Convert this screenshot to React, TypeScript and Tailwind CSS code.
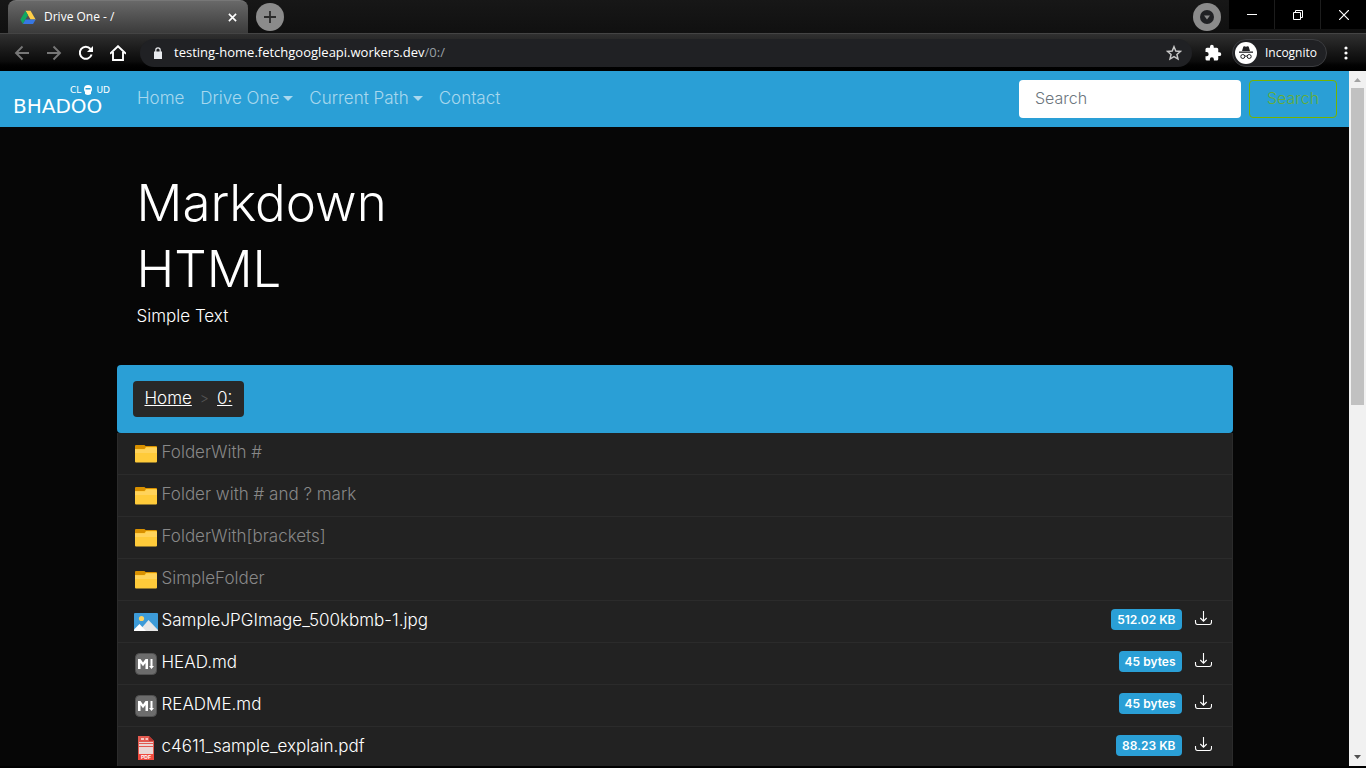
import type { ReactNode } from 'react';

function DriveLogo() {
  return (
    <svg viewBox="0 0 24 22" className="h-[14px] w-4 shrink-0" aria-hidden="true">
      <path d="M8 1h8l8 14h-8z" fill="#ffcf48" />
      <path d="M8 1l4 7L4 22l-4-7z" fill="#11a861" />
      <path d="M8 15h16l-4 7H4z" fill="#3777e3" />
    </svg>
  );
}

function PuzzleIcon() {
  return (
    <svg viewBox="0 0 24 24" className="size-[18px]" fill="#fff" aria-hidden="true">
      <path d="M20.500 11H19V7a2 2 0 0 0-2-2h-4V3.500a2.500 2.500 0 0 0-5 0V5H4a2 2 0 0 0-2 2v3.800h1.500a2.700 2.700 0 0 1 0 5.400H2V20a2 2 0 0 0 2 2h3.800v-1.500a2.700 2.700 0 0 1 5.400 0V22H17a2 2 0 0 0 2-2v-4h1.500a2.500 2.500 0 0 0 0-5z" />
    </svg>
  );
}

function IncognitoIcon() {
  return (
    <svg viewBox="0 0 22 22" className="size-[22px] shrink-0" aria-hidden="true">
      <circle cx="11" cy="11" r="11" fill="#fff" />
      <path d="M7 9l1.300-4.300q.3-.7 1-.5l1.700.5 1.700-.5q.7-.2 1 .5L15 9z" fill="#202124" />
      <path d="M4 9.500h14v1.300H4z" fill="#202124" />
      <g fill="none" stroke="#202124" strokeWidth="1">
        <circle cx="7.800" cy="14.500" r="2" />
        <circle cx="14.200" cy="14.500" r="2" />
        <path d="M9.800 14.300q1.200-.7 2.400 0" />
      </g>
    </svg>
  );
}

function TabStrip() {
  return (
    <div className="flex h-[33px] shrink-0 justify-between bg-linear-to-b from-[#171717] to-[#101010]">
      <div className="flex">
        <div className="ml-2 flex h-[33px] w-60 items-center rounded-t-lg border-t border-[#777] bg-linear-to-b from-[#696969] to-[#3b3b3b] pr-2 pl-3 text-white">
          <DriveLogo />
          <span className="ml-2 flex-1 text-xs">Drive One - /</span>
          <button aria-label="Close tab" className="grid size-4 place-items-center">
            <svg viewBox="0 0 10 10" className="size-[9px]" stroke="#fff" strokeWidth="1.800" aria-hidden="true">
              <path d="M1 1l8 8M9 1L1 9" />
            </svg>
          </button>
        </div>
        <button aria-label="New tab" className="mt-[3px] ml-2 grid size-7 place-items-center rounded-full bg-[#8b8b8b]">
          <svg viewBox="0 0 12 12" className="size-3" stroke="#2b2b2b" strokeWidth="1.800" aria-hidden="true">
            <path d="M6 0v12M0 6h12" />
          </svg>
        </button>
      </div>
      <div className="flex">
        <button aria-label="Search tabs" className="mt-[3px] mr-2 grid size-7 place-items-center rounded-full bg-[#8b8b8b]">
          <svg viewBox="0 0 14 14" className="size-[14px]" aria-hidden="true">
            <circle cx="7" cy="7" r="7" fill="#202124" />
            <path d="M4 5.500h6L7 9.500z" fill="#8b8b8b" />
          </svg>
        </button>
        <div className="flex h-[29px] gap-px bg-[#1c1c1c]">
          <button aria-label="Minimize" className="grid w-[45px] place-items-center bg-black">
            <svg viewBox="0 0 10 10" className="size-[10px]" stroke="#fff" aria-hidden="true">
              <path d="M0 4.500h10" />
            </svg>
          </button>
          <button aria-label="Restore" className="grid w-[45px] place-items-center bg-black">
            <svg viewBox="0 0 10 10" className="size-[10px]" stroke="#fff" fill="none" aria-hidden="true">
              <path d="M.5 2.500h7v7h-7zM2.500 2.500v-2h7v7h-2" />
            </svg>
          </button>
          <button aria-label="Close" className="grid w-[45px] place-items-center bg-black">
            <svg viewBox="0 0 10 10" className="size-[10px]" stroke="#fff" strokeWidth="1.200" aria-hidden="true">
              <path d="M0 0l10 10M10 0L0 10" />
            </svg>
          </button>
        </div>
      </div>
    </div>
  );
}

function Toolbar() {
  return (
    <div className="flex h-[38px] shrink-0 items-center border-t border-[#444] bg-linear-to-b from-[#303030] via-[#0b0b0b] via-75% to-black pr-[17px] pl-[14px] text-white">
      <div className="flex gap-4">
        <button aria-label="Back">
          <svg viewBox="0 0 16 16" className="size-4" fill="none" stroke="#777" strokeWidth="1.900" aria-hidden="true">
            <path d="M15 8H2M8.500 1.500L2 8l6.500 6.500" />
          </svg>
        </button>
        <button aria-label="Forward">
          <svg viewBox="0 0 16 16" className="size-4" fill="none" stroke="#777" strokeWidth="1.900" aria-hidden="true">
            <path d="M1 8h13M7.500 1.500L14 8l-6.500 6.500" />
          </svg>
        </button>
        <button aria-label="Reload">
          <svg viewBox="0 0 16 16" className="size-4" fill="none" stroke="#fff" strokeWidth="2" aria-hidden="true">
            <path d="M13.600 9.500A6 6 0 1 1 12.500 4" />
            <path d="M15 1v6H9z" fill="#fff" stroke="none" />
          </svg>
        </button>
        <button aria-label="Home page">
          <svg viewBox="0 0 16 16" className="size-4" fill="none" stroke="#fff" strokeWidth="1.900" aria-hidden="true">
            <path d="M0 8.700L8 1.200l8 7.500M3 7v8h10V7" />
          </svg>
        </button>
      </div>
      <div className="ml-[14px] flex h-7 flex-1 items-center rounded-full bg-[#202124] pr-[10px] pl-[14px]">
        <svg viewBox="0 0 8 12" className="h-3 w-2" aria-hidden="true">
          <path d="M0 4.500h8V12H0z" fill="#e8eaed" />
          <path d="M1.800 5V3a2.200 2.200 0 0 1 4.400 0v2" fill="none" stroke="#e8eaed" strokeWidth="1.200" />
        </svg>
        <span className="ml-3 flex-1 text-[13px]">
          testing-home.fetchgoogleapi.workers.dev<span className="text-[#9aa0a6]">/0:/</span>
        </span>
        <button aria-label="Bookmark this page">
          <svg viewBox="0 0 24 24" className="size-4" fill="none" stroke="#c8c8c8" strokeWidth="2.200" aria-hidden="true">
            <path d="M12 2.500l2.700 6.500 7 .6-5.300 4.600 1.600 6.900-6-3.700-6 3.700 1.600-6.900L2.300 9.600l7-.6z" />
          </svg>
        </button>
      </div>
      <button aria-label="Extensions" className="ml-3">
        <PuzzleIcon />
      </button>
      <div className="ml-[10px] flex h-7 items-center gap-2 rounded-full border border-[#3c3d40] bg-[#202124] pr-[9px] pl-[2px] text-xs">
        <IncognitoIcon />
        Incognito
      </div>
      <button aria-label="Menu" className="ml-4 px-px">
        <svg viewBox="0 0 4 14" className="h-[14px] w-1" fill="#fff" aria-hidden="true">
          <circle cx="2" cy="2" r="1.600" />
          <circle cx="2" cy="7" r="1.600" />
          <circle cx="2" cy="12" r="1.600" />
        </svg>
      </button>
    </div>
  );
}

function BrandLogo() {
  return (
    <a href="#" aria-label="Bhadoo Cloud" className="flex w-[98px] flex-col text-white">
      <svg viewBox="0 0 98 38" className="h-[38px] w-[98px]" fill="#fff" fontFamily="DejaVu Sans" fontWeight="400">
        <text x="57" y="13" fontSize="9">CL</text>
        <path d="M71 9q0-4 4-4t4 4q0 2-1 3v2q-3 2-6 0v-2q-1-1-1-3z" />
        <path d="M72.500 8h5v1.500h-5z" fill="#2a9fd6" />
        <text x="97" y="13" fontSize="9" textAnchor="end">UD</text>
        <text x="0" y="33" fontSize="20">BHADOO</text>
      </svg>
    </a>
  );
}

function Caret() {
  return (
    <svg viewBox="0 0 10 5" className="ml-1 h-[5px] w-[10px]" fill="currentColor" aria-hidden="true">
      <path d="M0 0h10L5 5z" />
    </svg>
  );
}

function NavItem({ children, menu }: { children: ReactNode; menu?: boolean }) {
  return (
    <a href="#" className="flex items-center px-2">
      {children}
      {menu && <Caret />}
    </a>
  );
}

function Navbar() {
  return (
    <nav className="flex h-14 shrink-0 items-center bg-[#2a9fd6] pr-3 pl-[13px]">
      <BrandLogo />
      <div className="ml-[18px] flex pb-[2px] text-white/60">
        <NavItem>Home</NavItem>
        <NavItem menu>Drive One</NavItem>
        <NavItem menu>Current Path</NavItem>
        <NavItem>Contact</NavItem>
      </div>
      <form className="ml-auto flex gap-2">
        <input
          type="search"
          aria-label="Search"
          placeholder="Search"
          className="h-[38px] w-[222px] rounded bg-white px-4 pb-[2px] text-base text-[#222] placeholder:text-[#6c757d]"
        />
        <button type="button" className="h-[38px] w-[88px] rounded border border-[#77b300] pb-[2px] text-base text-[#77b300]/75">
          Search
        </button>
      </form>
    </nav>
  );
}

function FolderIcon() {
  return (
    <svg viewBox="0 0 24 24" className="mt-1 size-6" aria-hidden="true">
      <path d="M1 4q0-1 1-1h8q1 0 1.500 1H22q1 0 1 1v6H1z" fill="#d89000" />
      <path d="M1 7h9.500L12 5h10q1 0 1 1v13.500q0 1-1 1H2q-1 0-1-1z" fill="#ffcb3a" />
      <path d="M1 7.500h10l1.300-1.700H23V11H1z" fill="#ffd35b" />
    </svg>
  );
}

function ImageIcon() {
  return (
    <svg viewBox="0 0 24 24" className="mt-1 size-6" aria-hidden="true">
      <path d="M1 3h22q1 0 1 1v17H0V4q0-1 1-1z" fill="#3d9bd8" />
      <circle cx="7.500" cy="8.500" r="2.600" fill="#ffd25e" />
      <path d="M5 21l9.500-11L24 20v1z" fill="#e6e6e6" />
      <path d="M0 21v-1.500L5.500 14l6.500 7z" fill="#fff" />
    </svg>
  );
}

function MarkdownIcon() {
  return (
    <svg viewBox="0 0 24 24" className="mt-1 size-6" aria-hidden="true">
      <rect x="1.500" y="1.500" width="21" height="21" rx="4" fill="#6c6c6c" stroke="#515151" />
      <path d="M4 17V7h2.500L9 10.500 11.500 7H14v10h-2.500v-6L9 14.300 6.500 11v6z" fill="#fff" />
      <path d="M16.500 7h2v7H20l-2.500 3L15 14h1.500z" fill="#fff" />
    </svg>
  );
}

function PdfIcon() {
  return (
    <svg viewBox="0 0 24 24" className="mt-1 size-6" aria-hidden="true">
      <path d="M4 0h11l5 5v18q0 1-1 1H5q-1 0-1-1z" fill="#e25a50" />
      <path d="M15 0l5 5h-5z" fill="#b93630" />
      <path d="M5 6h14v12H5z" fill="#e9d7d5" />
      <path d="M7 2h3v2H7zM11.500 2H14v2h-2.500z" fill="#f5c7c3" />
      <path d="M5 7.500h14M5 10.500h14" stroke="#e25a50" strokeWidth="1" />
      <path d="M4 18h16v6H4z" fill="#f04a3e" />
      <text x="12" y="23" fontSize="5" fontWeight="700" textAnchor="middle" fill="#fff" fontFamily="Liberation Sans">PDF</text>
    </svg>
  );
}

function DownloadIcon() {
  return (
    <svg viewBox="0 0 18 16" className="h-4 w-[18px]" fill="none" stroke="#fff" strokeWidth="1.100" aria-hidden="true">
      <path d="M9.500 1v10M6.300 8l3.200 3.200L12.700 8" />
      <path d="M1.500 10v2q0 2.500 2 2.500h12q2 0 2-2.500v-2" />
    </svg>
  );
}

const folders = ['FolderWith #', 'Folder with # and ? mark', 'FolderWith[brackets]', 'SimpleFolder'];

const files = [
  { name: 'SampleJPGImage_500kbmb-1.jpg', size: '512.02 KB', icon: <ImageIcon /> },
  { name: 'HEAD.md', size: '45 bytes', icon: <MarkdownIcon /> },
  { name: 'README.md', size: '45 bytes', icon: <MarkdownIcon /> },
  { name: 'c4611_sample_explain.pdf', size: '88.23 KB', icon: <PdfIcon /> },
];

const rowClass = 'flex h-[42px] items-center border-b border-[#2b2b2b] pr-5 pb-1 pl-4';

function FileList() {
  return (
    <ul className="border-x border-[#2b2b2b] bg-[#222]">
      {folders.map((name) => (
        <li key={name} className={rowClass}>
          <a href="#" className="flex items-center gap-1 text-[#888]">
            <FolderIcon />
            {name}
          </a>
        </li>
      ))}
      {files.map((file) => (
        <li key={file.name} className={rowClass}>
          <a href="#" className="flex flex-1 items-center gap-1 text-white">
            {file.icon}
            {file.name}
          </a>
          <span className="rounded bg-[#2a9fd6] px-[6px] text-xs leading-[21px] font-semibold text-white">{file.size}</span>
          <a href="#" aria-label={`Download ${file.name}`} className="mb-1 ml-3">
            <DownloadIcon />
          </a>
        </li>
      ))}
    </ul>
  );
}

function Scrollbar() {
  return (
    <div className="flex w-[17px] shrink-0 flex-col items-center bg-[#f1f1f1]" aria-hidden="true">
      <svg viewBox="0 0 17 17" className="size-[17px] shrink-0">
        <path d="M5 11h7L8.500 7z" fill="#a3a3a3" />
      </svg>
      <div className="h-[317px] w-[13px] bg-[#c1c1c1]" />
      <svg viewBox="0 0 17 17" className="mt-auto size-[17px] shrink-0">
        <path d="M5 6h7l-3.500 4z" fill="#505050" />
      </svg>
    </div>
  );
}

export default function App() {
  return (
    <div className="flex h-screen flex-col overflow-hidden bg-black pb-[2px] font-['Open_Sans',sans-serif]">
      <TabStrip />
      <Toolbar />
      <div className="flex min-h-0 flex-1">
        <div className="flex min-w-0 flex-1 flex-col overflow-hidden bg-[#060606] font-[Inter,sans-serif] text-[17px] leading-6 font-light text-white">
          <Navbar />
          <main className="mx-auto w-full max-w-[1140px] px-3">
            <header className="px-5 pt-[47px] pb-[37px]">
              <h1 className="mb-2 text-[51px] leading-[58px] font-light">Markdown</h1>
              <h1 className="mb-[6px] text-[51px] leading-[58px] font-light">HTML</h1>
              <p>Simple Text</p>
            </header>
            <div className="flex rounded bg-[#2a9fd6] p-4">
              <ol className="flex h-9 items-center gap-2 rounded bg-[#282828] px-3 pb-[2px]">
                <li><a href="#" className="underline">Home</a></li>
                <li className="text-sm text-[#555]">&gt;</li>
                <li><a href="#" className="underline">0:</a></li>
              </ol>
            </div>
            <FileList />
          </main>
        </div>
        <Scrollbar />
      </div>
    </div>
  );
}
